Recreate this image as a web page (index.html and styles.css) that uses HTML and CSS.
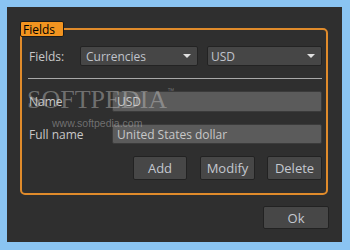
FILE: index.html
```html
<!DOCTYPE html>
<html lang="en">
<head>
    <meta charset="UTF-8">
    <meta name="viewport" content="width=device-width, initial-scale=1.0">
    <title>Fields</title>
    <link rel="stylesheet" href="styles.css">
</head>
<body>

<main class="window">
    <div class="group">
        <div class="legend">Fields</div>

        <div class="row fields-row">
            <span class="label">Fields:</span>
            <div class="combo combo-type">Currencies<span class="arrow"></span></div>
            <div class="combo combo-value">USD<span class="arrow"></span></div>
        </div>

        <div class="sep"></div>

        <div class="row form-row">
            <span class="label">Name</span>
            <div class="input">USD</div>
        </div>
        <div class="row form-row">
            <span class="label">Full name</span>
            <div class="input">United States dollar</div>
        </div>

        <div class="buttons">
            <button class="btn btn-add">Add</button>
            <button class="btn">Modify</button>
            <button class="btn">Delete</button>
        </div>

        <div class="watermark">SOFTPEDIA<sup>™</sup><small>www.softpedia.com</small></div>
    </div>

    <div class="footer">
        <button class="btn btn-ok">Ok</button>
    </div>
</main>

</body>
</html>
```

FILE: styles.css
```css
body {
    margin: 0;
    background: #8ac4f2;
    font-family: "Open Sans", "Noto Sans", sans-serif;
    font-size: 12px;
    color: #c8c8c8;}

.window {
    margin: 7px 8px 8px 7px;
    height: 235px;
    box-sizing: border-box;
    background: #2f2f2f;
    padding: 21px 14px 0 13px;}

.group {
    position: relative;
    height: 167px;
    box-sizing: border-box;
    border: 2px solid #e08b2b;
    border-radius: 5px;
    padding: 16px 4px 0 7px;}

.legend {
    position: absolute;
    top: -9px;
    left: -2px;
    width: 40px;
    height: 14px;
    line-height: 15px;
    background: #f29420;
    border: 1px solid #1a1a1a;
    border-radius: 2px;
    color: #000;
    font-size: 12px;
    padding-left: 2px;}

.row {
    display: flex;
    align-items: center;}

.label {
    flex: none;}

.fields-row .label {width: 51px;}

.combo {
    position: relative;
    height: 20px;
    line-height: 19px;
    box-sizing: border-box;
    background: #464646;
    border: 1px solid #232323;
    border-radius: 2px;
    padding-left: 5px;
    color: #c0c4cc;}

.combo-type {width: 118px;}

.combo-value {
    flex: 1;
    margin-left: 9px;
    padding-left: 3px;}

.arrow {
    position: absolute;
    right: 6px;
    top: 7px;
    width: 0;
    height: 0;
    border-left: 4px solid transparent;
    border-right: 4px solid transparent;
    border-top: 4px solid #e0e0e0;}

.sep {
    height: 1px;
    background: #a8a8a8;
    margin: 12px 0 12px -1px;}

.form-row {margin-bottom: 12px;}

.form-row .label {width: 83px;}

.input {
    flex: 1;
    height: 21px;
    line-height: 20px;
    box-sizing: border-box;
    background: #5b5b5b;
    border: 1px solid #3b3b3b;
    border-radius: 2px;
    padding-left: 4px;
    color: #c8c8c8;}

.form-row + .form-row .input {height: 20px; line-height: 19px;}

.buttons {
    display: flex;
    justify-content: flex-end;
    gap: 12px;
    margin-top: 1px;}

.btn {
    width: 55px;
    height: 24px;
    box-sizing: border-box;
    background: #474747;
    border: 1px solid #222;
    border-radius: 2px;
    color: #c4c8d0;
    font-family: "Open Sans", "Noto Sans", sans-serif;
    font-size: 13px;
    padding: 0;}

.btn-add {width: 54px; margin-right: 1px;}

.footer {
    display: flex;
    justify-content: flex-end;
    margin: 11px -1px 0 0;}

.btn-ok {width: 66px; height: 23px;}

/* watermark of the screenshot */
.watermark {
    position: absolute;
    left: 5px;
    top: 57px;
    font-family: "Liberation Serif", serif;
    font-size: 26px;
    color: rgba(205, 205, 205, 0.42);
    pointer-events: none;
    line-height: 26px;}

.watermark sup {
    font-family: "Liberation Sans", sans-serif;
    font-size: 7px;
    vertical-align: top;
    line-height: 8px;}

.watermark small {
    display: block;
    font-family: "Liberation Sans", sans-serif;
    font-size: 10.5px;
    line-height: 12px;
    padding-left: 25px;
    margin-top: 4px;}
```
